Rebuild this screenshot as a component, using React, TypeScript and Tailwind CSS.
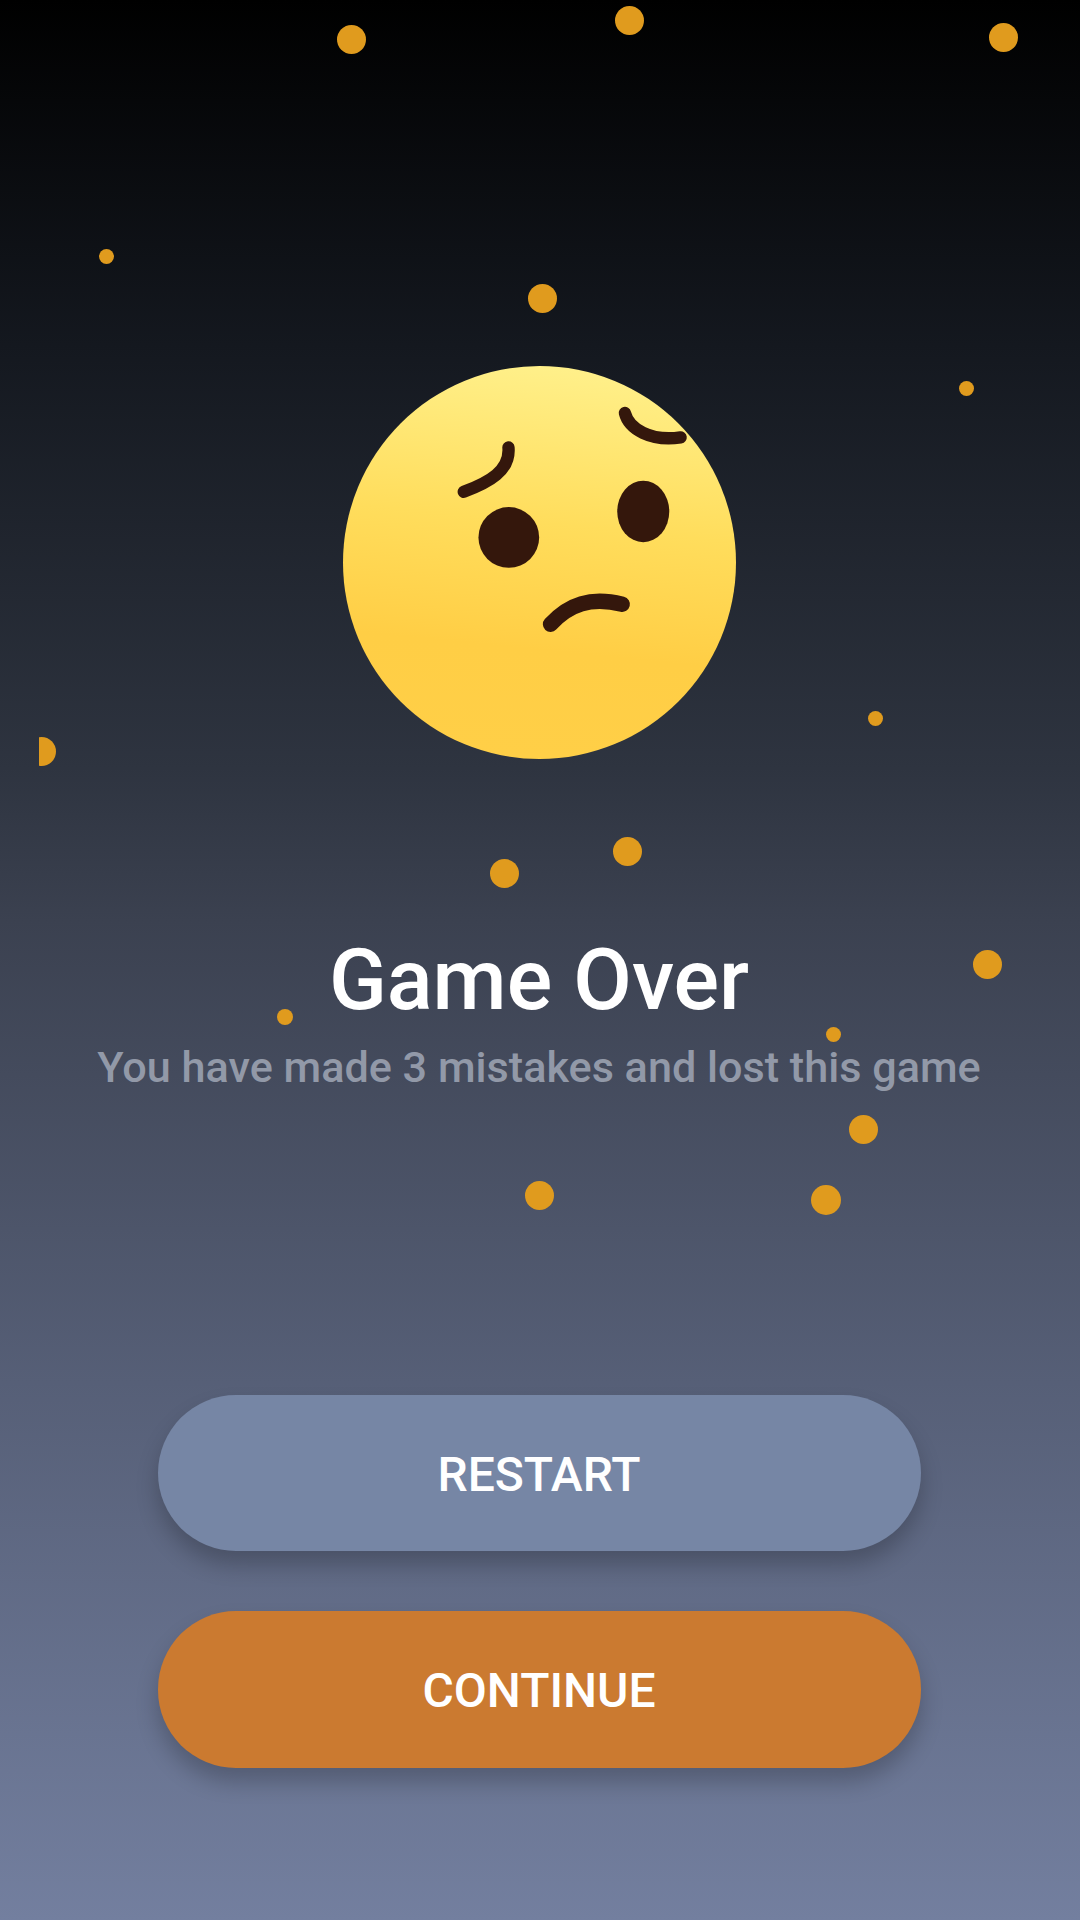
const DOTS = [
  { x: 351, y: 39, s: 29 },
  { x: 629, y: 20, s: 29 },
  { x: 1003, y: 37, s: 29 },
  { x: 106, y: 256, s: 15 },
  { x: 542, y: 298, s: 29 },
  { x: 966, y: 388, s: 15 },
  { x: 875, y: 718, s: 15 },
  { x: 504, y: 873, s: 29 },
  { x: 627, y: 851, s: 29 },
  { x: 987, y: 964, s: 29 },
  { x: 285, y: 1017, s: 16 },
  { x: 833, y: 1034, s: 15 },
  { x: 863, y: 1129, s: 29 },
  { x: 539, y: 1195, s: 29 },
  { x: 826, y: 1200, s: 30 },
];

function SadFace() {
  return (
    <svg width="393" height="393" viewBox="68 81 1178 1178">
      <defs>
        <linearGradient id="face" x1="0.55" y1="0" x2="0.45" y2="1">
          <stop offset="0" stopColor="#fff08a" />
          <stop offset="0.4" stopColor="#ffdd5c" />
          <stop offset="0.72" stopColor="#ffce45" />
          <stop offset="1" stopColor="#ffcf47" />
        </linearGradient>
      </defs>
      <circle cx="657" cy="670" r="589" fill="url(#face)" />
      <g fill="none" stroke="#34170c" strokeLinecap="round">
        <path d="M430 458C505 430 570 395 564 325" strokeWidth="37" />
        <path d="M913 222C925 270 990 308 1080 295" strokeWidth="37" />
        <path d="M690 855C745 795 810 772 905 795" strokeWidth="46" />
      </g>
      <circle cx="565" cy="595" r="91" fill="#34170c" />
      <ellipse cx="968" cy="517" rx="78" ry="92" fill="#34170c" />
    </svg>
  );
}

export default function App() {
  return (
    <div className="relative w-[1080px] h-[1920px] overflow-hidden flex flex-col items-center pt-[366px] pr-[2px] bg-[linear-gradient(to_bottom,#000000_0%,#14181f_18%,#2e3440_40%,#3b4150_48%,#565f77_72%,#737f9f_100%)] font-['Roboto',sans-serif]">
      {/* Falling coins */}
      {DOTS.map((d, i) => (
        <div
          key={i}
          className="absolute rounded-full bg-[#e09b1e]"
          style={{ left: d.x - d.s / 2, top: d.y - d.s / 2, width: d.s, height: d.s }}
        />
      ))}
      {/* Half coin, clipped at its left edge */}
      <div className="absolute left-[39px] top-[737px] w-[17px] h-[29px] overflow-hidden">
        <div className="w-[29px] h-[29px] rounded-full bg-[#e09b1e] -ml-[12px]" />
      </div>

      <div className="relative">
        <SadFace />
      </div>

      <h1 className="relative mt-[171px] text-[85px] leading-[100px] font-medium text-white">Game Over</h1>
      <p className="relative mt-[13px] text-[43.2px] leading-[50px] font-medium text-[#9299a8]">
        You have made 3 mistakes and lost this game
      </p>

      <div className="relative mt-[302px] flex flex-col gap-[60px]">
        <button className="w-[763px] h-[156px] pt-[3px] rounded-[78px] bg-[#7686a5] text-white text-[48px] font-medium shadow-[0_14px_22px_rgba(0,0,0,0.22)]">
          RESTART
        </button>
        <button className="w-[763px] h-[157px] pt-[3px] rounded-[78px] bg-[#cb7a30] text-white text-[48px] font-medium shadow-[0_14px_22px_rgba(0,0,0,0.22)]">
          CONTINUE
        </button>
      </div>
    </div>
  );
}
